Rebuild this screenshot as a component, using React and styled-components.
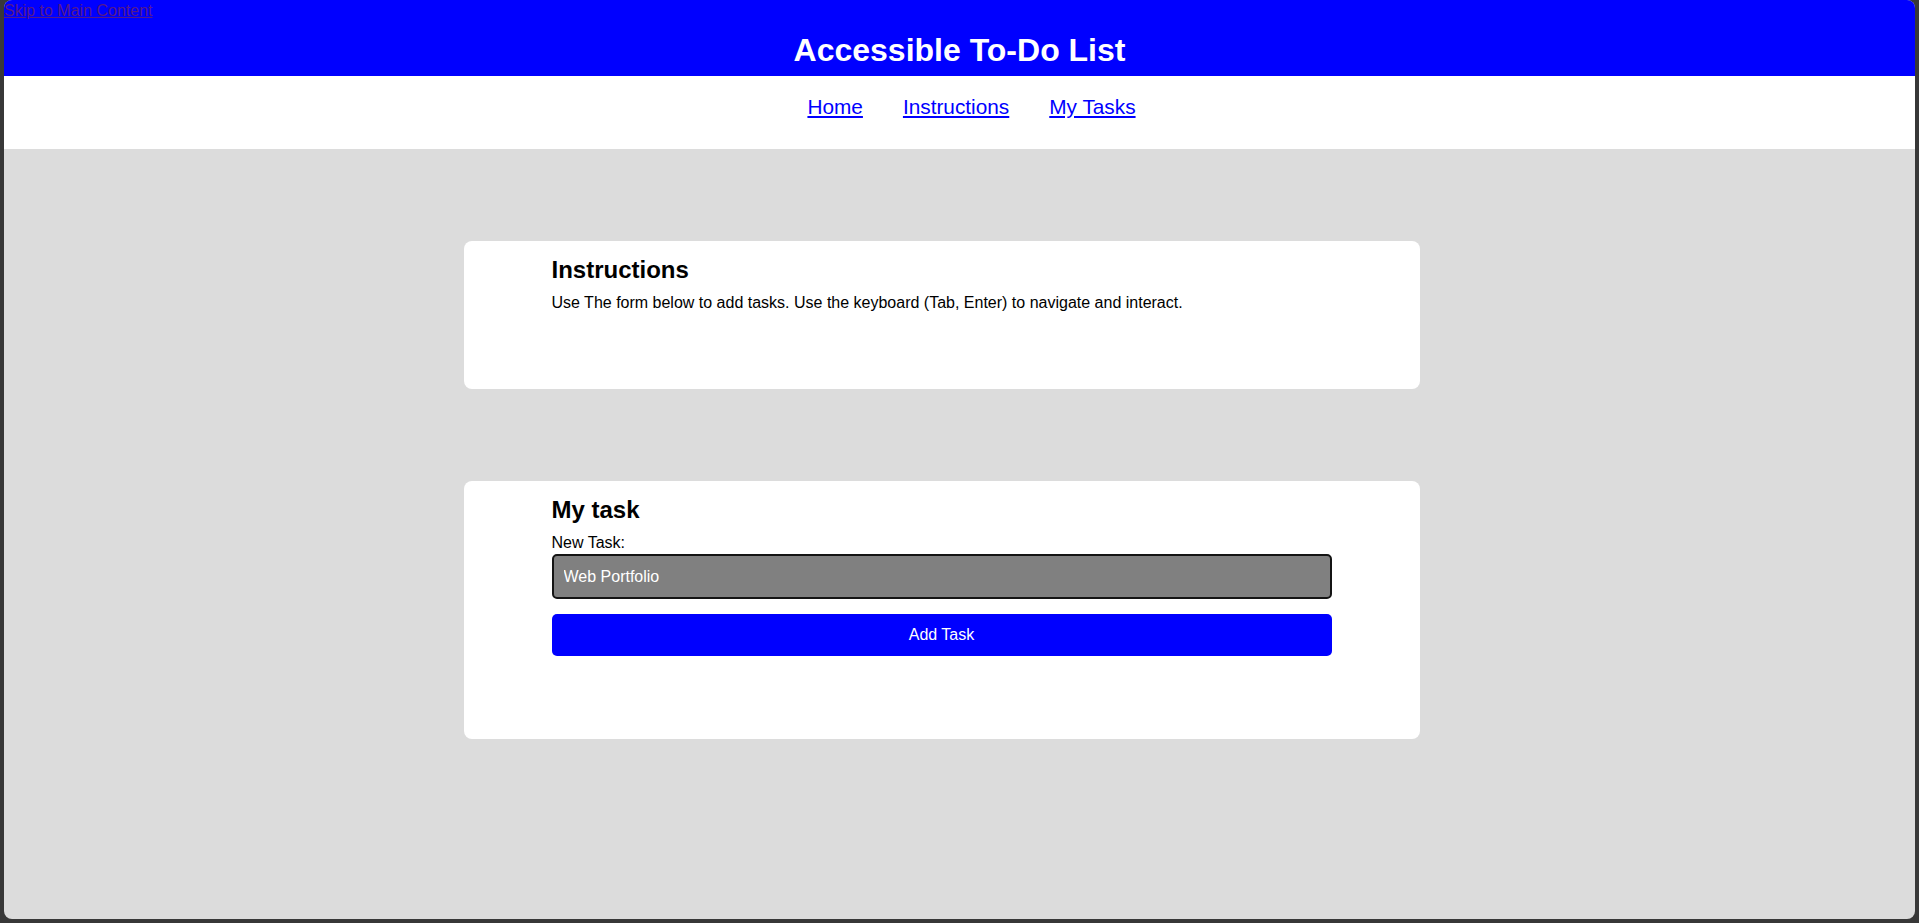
import styled, { createGlobalStyle } from "styled-components";

const GlobalStyle = createGlobalStyle`
  html, body {
    margin: 0;
    padding: 0;
    background: #383838;
  }
  body {
    font-family: "Liberation Sans", Arial, sans-serif;
  }
  * {
    box-sizing: border-box;
  }
`;

export default function App() {
  return (
    <>
      <GlobalStyle />
      <Page>
        <SkipLink href="#main">Skip to Main Content</SkipLink>
        <Header>
          <Title>Accessible To-Do List</Title>
        </Header>
        <Nav>
          <NavList>
            <li>
              <NavLink href="#home">Home</NavLink>
            </li>
            <li>
              <NavLink href="#instructions">Instructions</NavLink>
            </li>
            <li>
              <NavLink href="#tasks">My Tasks</NavLink>
            </li>
          </NavList>
        </Nav>
        <Main id="main">
          <Card id="instructions" $bottom="61px">
            <CardTitle>Instructions</CardTitle>
            <Text>
              Use The form below to add tasks. Use the keyboard (Tab, Enter) to
              navigate and interact.
            </Text>
          </Card>
          <Card id="tasks" $bottom="83px">
            <CardTitle>My task</CardTitle>
            <Form onSubmit={(e) => e.preventDefault()}>
              <Label htmlFor="new-task">New Task:</Label>
              <Input id="new-task" type="text" defaultValue="Web Portfolio" />
              <AddButton type="submit">Add Task</AddButton>
            </Form>
          </Card>
        </Main>
      </Page>
    </>
  );
}

const Page = styled.div`
  position: relative;
  margin: 0 4px 4px 4px;
  min-height: calc(100vh - 4px);
  display: flex;
  flex-direction: column;
  background: #dcdcdc;
  border-radius: 8px;
  overflow: hidden;
`;

const SkipLink = styled.a`
  position: absolute;
  top: 2px;
  left: 0;
  font-size: 16px;
  line-height: 18px;
  color: #551a8b;
  text-decoration: underline;
`;

const Header = styled.header`
  background: #0000ff;
  height: 76px;
  padding-top: 32px;
  text-align: center;
`;

const Title = styled.h1`
  margin: 0;
  color: #ffffff;
  font-size: 32px;
  line-height: 37px;
  font-weight: bold;
`;

const Nav = styled.nav`
  background: #ffffff;
  height: 73px;
  display: flex;
  align-items: center;
`;

const NavList = styled.ul`
  list-style: none;
  margin: 0;
  padding: 0 0 11px 24px;
  width: 100%;
  display: flex;
  justify-content: center;
  gap: 40px;
`;

const NavLink = styled.a`
  color: #0000ff;
  font-size: 20.8px;
  line-height: 24px;
  text-decoration: underline;
`;

const Main = styled.main`
  flex: 1;
  display: flex;
  flex-direction: column;
  align-items: center;
  gap: 92px;
  padding: 92px 36px 0 0;
`;

const Card = styled.section`
  width: 956px;
  background: #ffffff;
  border-radius: 8px;
  padding: 15px 88px ${(p) => p.$bottom} 88px;
`;

const CardTitle = styled.h2`
  margin: 0 0 10px 0;
  font-size: 24px;
  line-height: 28px;
  font-weight: bold;
  color: #000000;
`;

const Text = styled.p`
  margin: 0 0 16px 0;
  font-size: 16px;
  line-height: 18px;
  color: #000000;
`;

const Form = styled.form`
  display: flex;
  flex-direction: column;
`;

const Label = styled.label`
  font-size: 16px;
  line-height: 18px;
  color: #000000;
  margin-bottom: 2px;
`;

const Input = styled.input`
  height: 45px;
  padding: 0 10px;
  background: #808080;
  color: #ffffff;
  border: 2px solid #141414;
  border-radius: 5px;
  font-family: "Liberation Sans", Arial, sans-serif;
  font-size: 16px;
  outline: none;
`;

const AddButton = styled.button`
  margin-top: 15px;
  height: 42px;
  border: none;
  border-radius: 5px;
  background: #0000ff;
  color: #ffffff;
  font-family: "Liberation Sans", Arial, sans-serif;
  font-size: 16px;
  cursor: pointer;
`;
